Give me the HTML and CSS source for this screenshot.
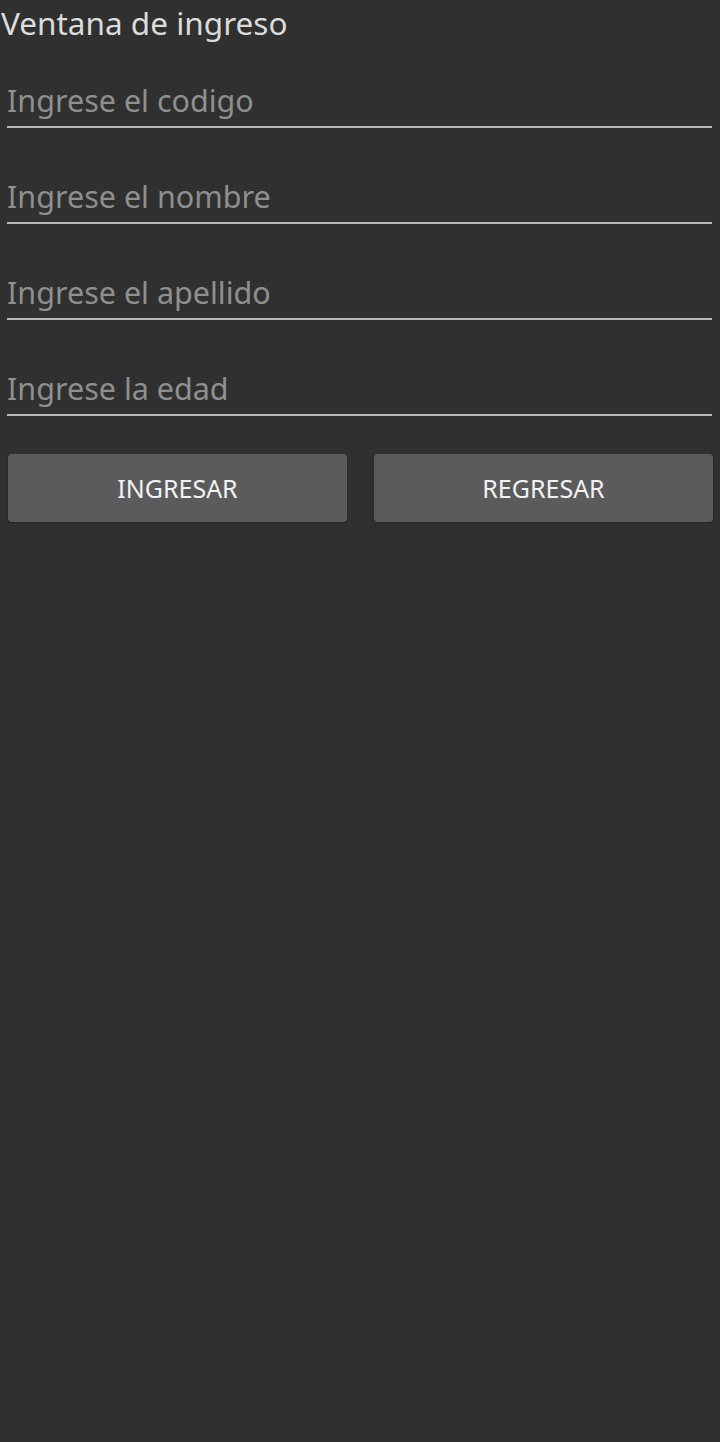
FILE: index.html
```html
<!DOCTYPE html>
<html lang="es">
<head>
<meta charset="utf-8">
<title>Ventana de ingreso</title>
<link rel="stylesheet" href="styles.css">
</head>
<body>
<div class="screen">
  <div class="title">Ventana de ingreso</div>
  <div class="fields">
    <div class="field"><span class="placeholder">Ingrese el codigo</span></div>
    <div class="field"><span class="placeholder">Ingrese el nombre</span></div>
    <div class="field"><span class="placeholder">Ingrese el apellido</span></div>
    <div class="field"><span class="placeholder">Ingrese la edad</span></div>
  </div>
  <div class="actions">
    <button class="btn">INGRESAR</button>
    <button class="btn">REGRESAR</button>
  </div>
</div>
</body>
</html>
```
FILE: styles.css
```css
html, body {
  margin: 0;
  padding: 0;
  background: #303030;
}
.screen {
  width: 720px;
  min-height: 1442px;
  font-family: "Noto Sans", "Open Sans", sans-serif;
}
.title {
  height: 44px;
  line-height: 46px;
  font-size: 31.5px;
  color: #dcdcdc;
  padding-left: 1px;
}
.fields {
  display: flex;
  flex-direction: column;
  gap: 12px;
  margin: 0 8px 0 7px;
}
.field {
  display: flex;
  align-items: flex-end;
  border-bottom: 2px solid #b8b8b8;
  padding-bottom: 6px;
  box-sizing: content-box;
  height: 76px;
}
.placeholder {
  font-size: 30.5px;
  line-height: 40px;
  color: #8f8f8f;
}
.actions {
  display: flex;
  gap: 27px;
  margin: 38px 7px 0 8px;
}
.btn {
  flex: 1;
  height: 68px;
  border: none;
  border-radius: 4px;
  background: #5b5b5d;
  color: #f2f2f2;
  font-family: "Noto Sans", "Open Sans", sans-serif;
  font-size: 25px;
  padding: 0;
  box-shadow: 0 1px 2px rgba(0,0,0,0.3);
}
```
